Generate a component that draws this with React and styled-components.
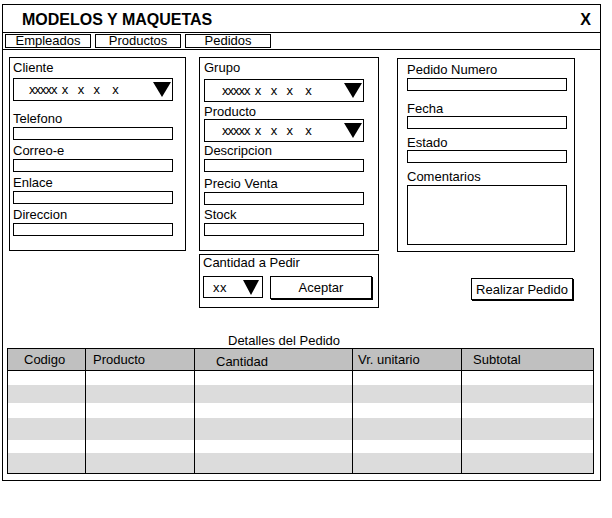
import React from "react";
import styled, { createGlobalStyle } from "styled-components";

const GlobalStyle = createGlobalStyle`
  * {
    box-sizing: border-box;
  }
  body {
    margin: 0;
    padding: 4px 0 0 2px;
    background: #fff;
    color: #000;
    font-family: "Liberation Sans", Arial, sans-serif;
    font-size: 13px;
  }
`;

const Frame = styled.div`
  width: 599px;
  height: 477px;
  border: 1px solid #000;
  display: flex;
  flex-direction: column;
`;

const TitleBar = styled.div`
  flex: none;
  height: 28px;
  display: flex;
  align-items: center;
  justify-content: space-between;
  padding: 3px 9px 0 19px;
  border-bottom: 1px solid #000;
  font-size: 16px;
  font-weight: bold;
  line-height: 18px;
`;

const NavBar = styled.div`
  flex: none;
  height: 17px;
  display: flex;
  align-items: center;
  gap: 4px;
  padding-left: 2px;
  border-bottom: 1px solid #000;
`;

const NavButton = styled.div`
  width: 86px;
  height: 14px;
  border: 1px solid #000;
  line-height: 12px;
  text-align: center;
`;

const Body = styled.div`
  display: flex;
  align-items: flex-start;
  padding: 7px 0 0 6px;
`;

const Column = styled.div`
  display: flex;
  flex-direction: column;
  align-items: flex-end;
  margin-left: ${(p) => p.$gap || 0}px;
  margin-top: ${(p) => p.$top || 0}px;
`;

const Panel = styled.div`
  width: ${(p) => p.$w}px;
  height: ${(p) => p.$h}px;
  border: 1px solid #000;
  padding: ${(p) => p.$pt}px 0 0 ${(p) => p.$pl}px;
  margin-top: ${(p) => p.$mt || 0}px;
  display: flex;
  flex-direction: column;
  align-items: flex-start;
`;

const Label = styled.div`
  line-height: 15px;
  white-space: nowrap;
  margin-top: ${(p) => p.$mt || 0}px;
`;

const Field = styled.div`
  display: flex;
  flex-direction: column;
  margin-top: ${(p) => p.$gap}px;
`;

const Input = styled.div`
  width: 160px;
  height: ${(p) => p.$h || 13}px;
  margin-top: ${(p) => p.$mt}px;
  border: 1px solid #000;
  background: #fff;
`;

const Select = styled.div`
  width: ${(p) => p.$w}px;
  height: ${(p) => p.$h}px;
  margin-top: ${(p) => p.$mt || 0}px;
  padding: 0 ${(p) => p.$pr}px 0 ${(p) => p.$pl}px;
  border: 1px solid #000;
  display: flex;
  align-items: center;
  font-size: 13px;
  letter-spacing: ${(p) => p.$ls ?? -1}px;
  white-space: pre;
`;

const Arrow = styled.span`
  margin-left: auto;
  width: 0;
  height: 0;
  border-left: ${(p) => p.$w / 2}px solid transparent;
  border-right: ${(p) => p.$w / 2}px solid transparent;
  border-top: 15px solid #000;
`;

const ButtonRow = styled.div`
  display: flex;
  align-items: flex-start;
  gap: 7px;
  margin-top: 6px;
`;

const Button = styled.div`
  width: ${(p) => p.$w}px;
  height: ${(p) => p.$h}px;
  margin-top: ${(p) => p.$mt || 0}px;
  margin-right: ${(p) => p.$mr || 0}px;
  border: 1px solid #000;
  box-shadow: 1px 1px 0 #000;
  background: #fff;
  display: flex;
  align-items: center;
  justify-content: center;
  white-space: nowrap;
`;

const Caption = styled.div`
  margin-top: 25px;
  padding-left: 225px;
  line-height: 15px;
`;

const Table = styled.div`
  width: 587px;
  margin-left: 4px;
  border: 1px solid #000;
`;

const Row = styled.div`
  display: grid;
  grid-template-columns: 78px 109px 158px 109px 1fr;
  height: ${(p) => p.$h}px;
  background: ${(p) => (p.$head ? "#c0c0c0" : p.$shade ? "#dcdcdc" : "#fff")};
  border-bottom: ${(p) => (p.$head ? "1px solid #000" : "none")};
`;

const Cell = styled.div`
  border-right: 1px solid #000;
  padding: ${(p) => p.$pt || 0}px 0 0 ${(p) => p.$indent || 0}px;
  line-height: 15px;
  white-space: nowrap;

  &:last-child {
    border-right: none;
  }
`;

const DropText = "xxxxx  x    x    x     x";

const FormField = ({ label, gap, mt = 1, h }) => (
  <Field $gap={gap}>
    <Label>{label}</Label>
    <Input $mt={mt} $h={h} />
  </Field>
);

const columns = [
  { label: "Codigo", indent: 16, pt: 3 },
  { label: "Producto", indent: 7, pt: 3 },
  { label: "Cantidad", indent: 21, pt: 5 },
  { label: "Vr. unitario", indent: 5, pt: 3 },
  { label: "Subtotal", indent: 11, pt: 3 },
];

const rowHeights = [14, 18, 15, 22, 13, 20];

export default function App() {
  return (
    <>
      <GlobalStyle />
      <Frame>
        <TitleBar>
          <span>MODELOS Y MAQUETAS</span>
          <span>X</span>
        </TitleBar>
        <NavBar>
          <NavButton>Empleados</NavButton>
          <NavButton>Productos</NavButton>
          <NavButton>Pedidos</NavButton>
        </NavBar>

        <Body>
          <Column>
            <Panel $w={177} $h={194} $pt={2} $pl={3}>
              <Label>Cliente</Label>
              <Select $w={160} $h={23} $mt={3} $pl={15} $pr={1}>
                {DropText}
                <Arrow $w={18} />
              </Select>
              <FormField label="Telefono" gap={10} />
              <FormField label="Correo-e" gap={3} />
              <FormField label="Enlace" gap={3} />
              <FormField label="Direccion" gap={3} />
            </Panel>
          </Column>

          <Column $gap={13}>
            <Panel $w={180} $h={194} $pt={2} $pl={4}>
              <Label>Grupo</Label>
              <Select $w={160} $h={23} $mt={4} $pl={17} $pr={1}>
                {DropText}
                <Arrow $w={18} />
              </Select>
              <Label $mt={2}>Producto</Label>
              <Select $w={160} $h={23} $pl={17} $pr={1}>
                {DropText}
                <Arrow $w={18} />
              </Select>
              <FormField label="Descripcion" gap={1} />
              <FormField label="Precio Venta" gap={4} />
              <FormField label="Stock" gap={2} />
            </Panel>
            <Panel $w={180} $h={54} $pt={0} $pl={3} $mt={3}>
              <Label>Cantidad a Pedir</Label>
              <ButtonRow>
                <Select $w={60} $h={22} $pl={9} $pr={3} $ls={0.5}>
                  xx
                  <Arrow $w={16} />
                </Select>
                <Button $w={102} $h={23}>
                  Aceptar
                </Button>
              </ButtonRow>
            </Panel>
          </Column>

          <Column $gap={18} $top={1}>
            <Panel $w={178} $h={194} $pt={3} $pl={9}>
              <FormField label="Pedido Numero" gap={0} />
              <FormField label="Fecha" gap={10} mt={0} />
              <FormField label="Estado" gap={6} mt={0} />
              <FormField label="Comentarios" gap={6} h={60} />
            </Panel>
            <Button $w={102} $h={22} $mt={26} $mr={2}>
              Realizar Pedido
            </Button>
          </Column>
        </Body>

        <Caption>Detalles del Pedido</Caption>
        <Table>
          <Row $head $h={22}>
            {columns.map((c) => (
              <Cell key={c.label} $indent={c.indent} $pt={c.pt}>
                {c.label}
              </Cell>
            ))}
          </Row>
          {rowHeights.map((h, i) => (
            <Row key={i} $h={h} $shade={i % 2 === 1}>
              {columns.map((c) => (
                <Cell key={c.label} />
              ))}
            </Row>
          ))}
        </Table>
      </Frame>
    </>
  );
}
